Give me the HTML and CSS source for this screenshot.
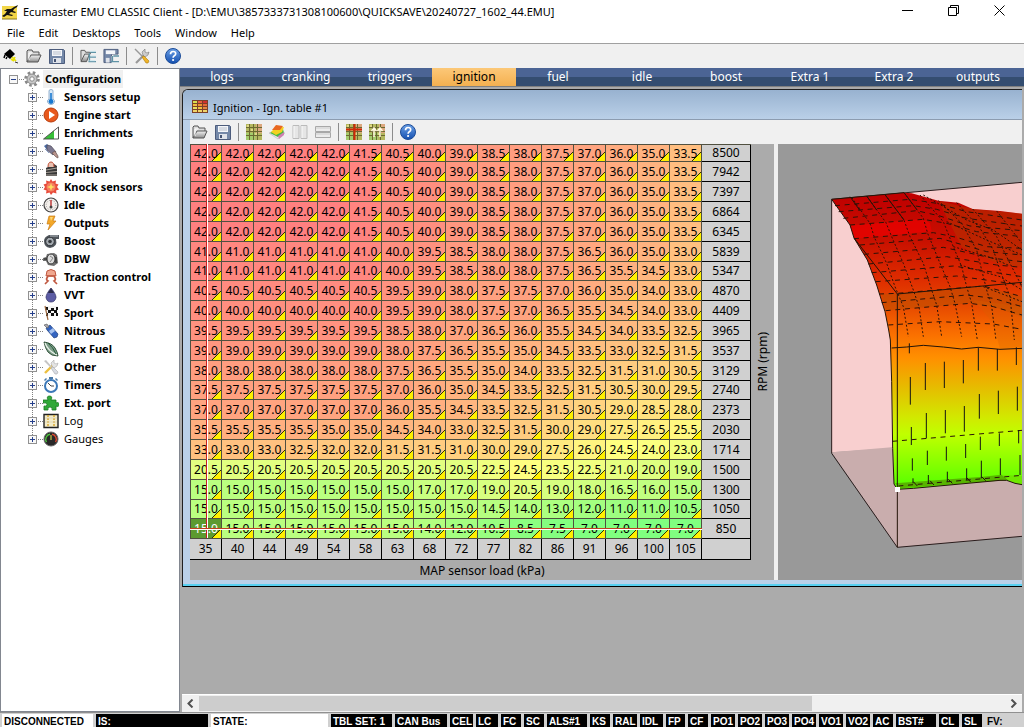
FILE: index.html
```html
<!DOCTYPE html>
<html lang="en">
<head>
    <meta charset="UTF-8">
    <meta name="viewport" content="width=device-width, initial-scale=1.0">
    <title>Ecumaster EMU CLASSIC Client</title>
    <link rel="stylesheet" href="styles.css">
</head>
<body>

    <!-- shared icons -->
    <svg class="defs" width="0" height="0">
        <defs>
            <linearGradient id="surf" x1="0" y1="170" x2="0" y2="1050" gradientUnits="userSpaceOnUse">
                <stop offset="0" stop-color="#c00000"/>
                <stop offset="0.15" stop-color="#c81000"/>
                <stop offset="0.28" stop-color="#de2c00"/>
                <stop offset="0.38" stop-color="#e84c00"/>
                <stop offset="0.47" stop-color="#fa7000"/>
                <stop offset="0.55" stop-color="#ff9000"/>
                <stop offset="0.65" stop-color="#e6bc00"/>
                <stop offset="0.75" stop-color="#d2e800"/>
                <stop offset="0.81" stop-color="#c0ff00"/>
                <stop offset="0.92" stop-color="#80ff00"/>
                <stop offset="1" stop-color="#50ff00"/>
            </linearGradient>
            <linearGradient id="blueball" x1="0" y1="0" x2="0" y2="1">
                <stop offset="0" stop-color="#6ba0e6"/>
                <stop offset="1" stop-color="#1550b0"/>
            </linearGradient>
            <linearGradient id="metal" x1="0" y1="0" x2="0" y2="1">
                <stop offset="0" stop-color="#f4f4f4"/>
                <stop offset="1" stop-color="#8c8c8c"/>
            </linearGradient>
        </defs>
        <symbol id="i-logo" viewBox="0 0 16 16">
            <path d="M0 2h15v13H0z" fill="#f2d648"/>
            <path d="M0 12l3-2 2-3-3 0 3-2 4 0 3-2 4-2-1 2-3 2-1 2 3 1-1 1-4-1-2 2 4 1-1 1-5-1-3 2z" fill="#111"/>
            <path d="M0 15h15" stroke="#8c7c20"/>
        </symbol>
        <symbol id="i-connect" viewBox="0 0 16 16">
            <path d="M1 6l6-5 5 5-5 5z" fill="#000"/>
            <path d="M2 7l-1 3M4 9l-1 2" stroke="#000" stroke-width="1.5"/>
            <path d="M9 9l4 4M10 13l2-4M8 11l3 2" stroke="#e8e000" stroke-width="1.6"/>
            <path d="M12 14l3 1" stroke="#333"/>
        </symbol>
        <symbol id="i-open" viewBox="0 0 16 16">
            <path d="M1 14V3l1-1h4l1 2h6v3" fill="#ddd" stroke="#555"/>
            <path d="M1 14l4-7h10l-3 7z" fill="url(#metal)" stroke="#555"/>
            <path d="M3 12V5h3" stroke="#fff" fill="none"/>
        </symbol>
        <symbol id="i-save" viewBox="0 0 16 16">
            <path d="M.5 1.500h14l1 1v13H.5z" fill="#7488a8" stroke="#4c5c7c"/>
            <path d="M3 2h10v6H3z" fill="#f4f6fa"/>
            <path d="M4 4h8M4 6h8" stroke="#b8c0cc"/>
            <path d="M4 10h8v5H4z" fill="#dfe3ea"/>
            <path d="M5 11h2v3H5z" fill="#445474"/>
        </symbol>
        <symbol id="i-opentree" viewBox="0 0 17 16">
            <path d="M1 13V2h4l1 2h5v2" fill="#ddd" stroke="#555"/>
            <path d="M1 14l4-8h5l-3 8z" fill="url(#metal)" stroke="#555"/>
            <path d="M11 4h6M9 9h8M9 14h8M10 5v9" stroke="#5f93a6" fill="none" stroke-width="1.500"/>
            <path d="M10 3h7M11 8h6M10 13h6" stroke="#cfe8ef"/>
        </symbol>
        <symbol id="i-savetree" viewBox="0 0 17 16">
            <path d="M1 1h15v5H9v9H1z" fill="#7488a8" stroke="#4c5c7c"/>
            <path d="M3 2h10v4H3z" fill="#f4f6fa"/>
            <path d="M3 10h4v5H3z" fill="#dfe3ea"/>
            <path d="M9 8h7v7H9z" fill="#f0f0f0"/>
            <path d="M11 8h6M8 14h9M10 8v6" stroke="#5f93a6" fill="none" stroke-width="1.500"/>
        </symbol>
        <symbol id="i-tools" viewBox="0 0 16 16">
            <path d="M2 15l8-8" stroke="#999" stroke-width="2.200"/>
            <path d="M9 7l-1-3 3-3 0 3 2 1 2-1-1 3-3 2z" fill="#ccc" stroke="#777" stroke-width=".6"/>
            <path d="M1 1l8 8" stroke="#999" stroke-width="1.500"/>
            <path d="M8 9l2-1 5 5-1 2-2 0z" fill="#f0b428" stroke="#a87810" stroke-width=".6"/>
        </symbol>
        <symbol id="i-other" viewBox="0 0 16 16">
            <path d="M2 14l8-8" stroke="#ecc040" stroke-width="2.400"/>
            <path d="M9 7l-1-3 3-3 0 3 2 1 2-1-1 3-3 2z" fill="#e4e4e4" stroke="#aaa" stroke-width=".6"/>
            <path d="M1 2l2-1 6 7-1 1z" fill="#c4c4c4"/>
            <path d="M8 9l2-1 5 5-1 2-2 0z" fill="#d8dce4" stroke="#a8a8a8" stroke-width=".6"/>
        </symbol>
        <symbol id="i-help" viewBox="0 0 16 16">
            <circle cx="8" cy="8" r="7.500" fill="url(#blueball)" stroke="#1c4c98"/>
            <path d="M5.500 6.200q0-2.700 2.600-2.700t2.600 2.200q0 1.300-1.400 2.100-1.200.7-1.200 1.900" fill="none" stroke="#fff" stroke-width="1.700"/>
            <circle cx="8.100" cy="12" r="1.100" fill="#fff"/>
        </symbol>
        <symbol id="i-grid" viewBox="0 0 16 16">
            <path d="M0 0h16v16H0z" fill="#b4b860"/>
            <path d="M10 0h6v9h-6z" fill="#dca880"/>
            <path d="M0 9h9v7H0z" fill="#a4cc6c"/>
            <path d="M0 3.500h16M0 7.500h16M0 11.500h16M3.500 0v16M7.500 0v16M11.500 0v16" stroke="#6c6a30"/>
            <path d="M1 1h2v2H1zM5 5h2v2H5zM9 9h2v2H9z" fill="#e0d884"/>
        </symbol>
        <symbol id="i-surface" viewBox="0 0 16 16">
            <path d="M0 9l8-3 8 3-7 6z" fill="#e8e0f0" stroke="#bbb" stroke-width=".6"/>
            <path d="M1 9l5-3 8-1 1 4-6 4z" fill="#44b840"/>
            <path d="M2 8l4-4 9-1-2 5-6 3z" fill="#f4d020"/>
            <path d="M3 6l4-5 7 1-3 4z" fill="#e86820"/>
            <path d="M9 12l6-4v3l-5 4z" fill="#d080b0"/>
        </symbol>
        <symbol id="i-vsplit" viewBox="0 0 16 16">
            <path d="M1 1.500h6v13H1zM9 1.500h6v13H9z" fill="#e6e6e6" stroke="#bababa"/>
            <path d="M2 2v12M10 2v12" stroke="#fafafa"/>
        </symbol>
        <symbol id="i-hsplit" viewBox="0 0 16 16">
            <path d="M.5 2.500h15v5H.5zM.5 8.500h15v5H.5z" fill="#ececec" stroke="#a8a8a8"/>
            <path d="M1 4h14M1 10h14" stroke="#ccc"/>
        </symbol>
        <symbol id="i-gridcross" viewBox="0 0 16 16">
            <use href="#i-grid"/>
            <path d="M0 5.500h16M8.500 0v16" stroke="#d02808" stroke-width="2"/>
        </symbol>
        <symbol id="i-gridup" viewBox="0 0 16 16">
            <use href="#i-grid"/>
            <path d="M5 13V5M2.500 7L5 4l2.500 3M11 13V5M8.500 7L11 4l2.500 3" stroke="#fff8e0" stroke-width="1.500" fill="none"/>
        </symbol>
        <symbol id="i-table" viewBox="0 0 16 13">
            <path d="M0 0h16v13H0z" fill="#7c4028"/>
            <path d="M1 1h4v2H1z" fill="#d8e050"/><path d="M6 1h4v2H6z" fill="#e86040"/><path d="M11 1h4v2h-4z" fill="#d03030"/>
            <path d="M1 4h4v2H1zM6 7h4v2H6z" fill="#f0c040"/><path d="M6 4h4v2H6z" fill="#f09030"/><path d="M11 4h4v2h-4z" fill="#e86838"/>
            <path d="M1 7h4v2H1z" fill="#e8e060"/><path d="M11 7h4v2h-4z" fill="#e88840"/>
            <path d="M1 10h4v2H1zM6 10h4v2H6zM11 10h4v2h-4z" fill="#f0d468"/>
        </symbol>
        <symbol id="i-gear" viewBox="0 0 16 16">
            <circle cx="8" cy="8" r="6.500" fill="none" stroke="#888" stroke-width="2.600" stroke-dasharray="2.600 2.500"/>
            <circle cx="8" cy="8" r="5" fill="#c8c8c8" stroke="#888"/>
            <circle cx="8" cy="8" r="2.200" fill="#fff" stroke="#888"/>
        </symbol>
        <symbol id="i-thermo" viewBox="0 0 16 16">
            <path d="M6 2q0-1.500 2-1.500T10 2v8q2 1 1.500 3-1 2.500-3.500 2.500T4.500 13q-.5-2 1.500-3z" fill="#dcebf8" stroke="#7ca0c4" stroke-width=".8"/>
            <circle cx="8" cy="12.500" r="2.400" fill="#1878d0"/>
            <path d="M8 4v8" stroke="#1878d0" stroke-width="1.600"/>
        </symbol>
        <symbol id="i-start" viewBox="0 0 16 16">
            <circle cx="8" cy="8" r="7" fill="#e8581c" stroke="#b83c0c"/>
            <path d="M6 4l6 4-6 4z" fill="#fff"/>
        </symbol>
        <symbol id="i-enrich" viewBox="0 0 16 16">
            <path d="M1 14L15 2v12z" fill="#fff"/>
            <path d="M1 14l10-8.500V14z" fill="#38c038"/>
            <path d="M.5 14L15.500 2v12z" fill="none" stroke="#444" stroke-width=".9"/>
        </symbol>
        <symbol id="i-fuel" viewBox="0 0 16 16">
            <path d="M1 3l3-2 3 3-3 3z" fill="#4c6ca4"/>
            <path d="M4 2l4 1 5 6-3 3-6-5z" fill="#7c7890" stroke="#4c4858" stroke-width=".7"/>
            <path d="M9 10l3-2 3 5 0 2-2-1z" fill="#b8948c" stroke="#604c48" stroke-width=".6"/>
            <path d="M2 6l4 4" stroke="#889cc4"/>
        </symbol>
        <symbol id="i-coil" viewBox="0 0 16 16">
            <path d="M3 7l8-4 3 2v10l-11 0z" fill="#383838"/>
            <path d="M3 9l11-2M3 11.500l11-1M3 14h11" stroke="#a8a098"/>
            <path d="M5 6q0-5 3-5t3 5" fill="#e8c0b0" stroke="#c05038"/>
        </symbol>
        <symbol id="i-knock" viewBox="0 0 16 16">
            <path d="M8 0l1.500 2.500L13 1.500l-.5 3 3 1L14 8l2 2.500-3 1 .5 3-3.500-1L8 16l-1.500-2.500-3.500 1 .5-3-3-1L2 8 .5 5.500l3-1L3 1.500l3.500 1z" fill="#e84c3c"/>
            <circle cx="8" cy="8" r="4.500" fill="#f48060"/>
            <path d="M8 4l1 3 3 1-3 1-1 3-1-3-3-1 3-1z" fill="#ffe060"/>
        </symbol>
        <symbol id="i-gauge" viewBox="0 0 16 16">
            <circle cx="8" cy="8" r="7" fill="#f4f0ec" stroke="#444" stroke-width="1.200"/>
            <circle cx="8" cy="8" r="4.800" fill="none" stroke="#999" stroke-dasharray="1 1.500"/>
            <path d="M8 3v6" stroke="#b82020" stroke-width="1.300"/>
            <circle cx="8" cy="10" r="1.500" fill="#444"/>
        </symbol>
        <symbol id="i-bolt" viewBox="0 0 16 16">
            <path d="M6 1h6l-2 5h3L5 15l2-6H4z" fill="#f4a828" stroke="#c87c18" stroke-width=".7"/>
            <path d="M7 2h3L8 6" fill="#fcd878"/>
        </symbol>
        <symbol id="i-turbo" viewBox="0 0 16 16">
            <path d="M6 2h10v4h-3q2 8-6 9-6-1-6-7 0-4 5-6z" fill="#50565c"/>
            <circle cx="7" cy="8.500" r="4.300" fill="#a4aab0" stroke="#2c3034"/>
            <circle cx="7" cy="8.500" r="1.800" fill="#34383c"/>
            <path d="M7 3h8" stroke="#b4bac0"/>
        </symbol>
        <symbol id="i-dbw" viewBox="0 0 16 16">
            <path d="M0 7l3-1 1-3 7-1 3 2 1 8-4 3-6-1-2-4-3 0z" fill="#707070"/>
            <ellipse cx="8" cy="8" rx="4" ry="5" fill="#dcdcdc" stroke="#383838"/>
            <path d="M7 5l3 2-3 4" fill="none" stroke="#888"/>
            <path d="M1 8h3M13 6v6" stroke="#222"/>
        </symbol>
        <symbol id="i-traction" viewBox="0 0 16 16">
            <path d="M4 2q4-3 8 0l1 5H3z" fill="#f0a890" stroke="#c05840"/>
            <path d="M4 7h8M5 8q-3 2 0 4l-3 3M11 8q3 2 0 4l3 3" fill="none" stroke="#c05840" stroke-width="1.700"/>
        </symbol>
        <symbol id="i-drop" viewBox="0 0 16 16">
            <path d="M8 1q5 6 5 9.500-1 4.500-5 4.500t-5-4.500Q3 7 8 1z" fill="#5c5ca4" stroke="#3c3c70" stroke-width=".8"/>
            <path d="M8 1l3 5H5z" fill="#2c2c48"/>
        </symbol>
        <symbol id="i-flag" viewBox="0 0 16 16">
            <path d="M2 1h13v10H4z" fill="#f4f4f4"/>
            <path d="M2 2h3v3H2zM8 3h3v3H8zM13 2h2v3h-2zM5 5h3v3H5zM11 5h3v3h-3zM3 8h2v3H3zM8 8h3v3H8zM13 8h2v3h-2z" fill="#111"/>
            <path d="M2 1l3 14" stroke="#9c6840" stroke-width="1.200"/>
        </symbol>
        <symbol id="i-bottle" viewBox="0 0 16 16">
            <path d="M3 5l4-3 8 9-1 3-3 1-7-8z" fill="#3464c0" stroke="#20407c" stroke-width=".7"/>
            <path d="M6 8l4-3 2 3-4 3z" fill="#a8c4f0"/>
            <path d="M1 2l3-1 2 3-2 1z" fill="#a8a8b0" stroke="#555" stroke-width=".6"/>
        </symbol>
        <symbol id="i-leaf" viewBox="0 0 16 16">
            <path d="M1 1q8 1 11 6t3 8q-7 0-10-4T1 1z" fill="#7c9c88" stroke="#34543c"/>
            <path d="M2 2q3 8 12 12" stroke="#e8f0e8" fill="none" stroke-width="1.300"/>
            <path d="M5 2q5 4 8 11" stroke="#285c3c" fill="none"/>
        </symbol>
        <symbol id="i-timer" viewBox="0 0 16 16">
            <path d="M6 0h4v2H6zM1 3l2-2 1 1-2 2zM13 1l2 2-1 1-2-2z" fill="#4878a8"/>
            <circle cx="8" cy="9" r="6" fill="#fff" stroke="#3c78b8" stroke-width="2"/>
            <path d="M5 6l3 3h3" stroke="#444" fill="none"/>
        </symbol>
        <symbol id="i-puzzle" viewBox="0 0 16 16">
            <path d="M0 5h5Q3 1 6.500 1T8 5h5v3q3-1.500 3 1.500T13 11v4H9q1-3-2-3t-2 3H1v-4q3 1 3-1.500T0 8z" fill="#30a838" stroke="#187820" stroke-width=".8"/>
        </symbol>
        <symbol id="i-log" viewBox="0 0 16 16">
            <path d="M1 1.500h14v13H1z" fill="#f4ecc8" stroke="#222" stroke-width="1.400"/>
            <path d="M5 2v12M11 2v12" stroke="#d8a830" stroke-width="1.500" stroke-dasharray="2 1"/>
            <path d="M2 5h12M2 9h12" stroke="#dcd4bc" stroke-width=".8"/>
        </symbol>
        <symbol id="i-dial" viewBox="0 0 16 16">
            <circle cx="8" cy="8" r="7" fill="#282828" stroke="#666"/>
            <path d="M3.500 11A5 5 0 0 1 7 3.300" stroke="#50c840" fill="none" stroke-width="1.400"/>
            <path d="M9 3.300A5 5 0 0 1 12.500 11" stroke="#e04830" fill="none" stroke-width="1.400"/>
            <path d="M8 4v5" stroke="#e8e850"/>
        </symbol>
    </svg>

    <header class="titlebar">
        <svg class="icon"><use href="#i-logo"/></svg>
        <h1>Ecumaster EMU CLASSIC Client - [D:\EMU\3857333731308100600\QUICKSAVE\20240727_1602_44.EMU]</h1>
        <div class="windowButtons">
            <button aria-label="Minimize"><svg width="11" height="11"><path d="M0 5.500h11" stroke="#000"/></svg></button>
            <button aria-label="Restore"><svg width="11" height="11"><path d="M.5 2.500h8v8h-8zM2.500 2.500v-2h8v8h-2" fill="none" stroke="#000"/></svg></button>
            <button aria-label="Close"><svg width="11" height="11"><path d="M.5.5l10 10M10.500.5l-10 10" stroke="#000"/></svg></button>
        </div>
    </header>

    <nav class="menu">
        <button>File</button>
        <button>Edit</button>
        <button>Desktops</button>
        <button>Tools</button>
        <button>Window</button>
        <button>Help</button>
    </nav>

    <div class="toolbar mainTools">
        <button aria-label="Connect"><svg class="icon"><use href="#i-connect"/></svg></button>
        <button aria-label="Open"><svg class="icon"><use href="#i-open"/></svg></button>
        <button aria-label="Save"><svg class="icon"><use href="#i-save"/></svg></button>
        <span class="sep"></span>
        <button aria-label="Open desktops"><svg class="icon"><use href="#i-opentree"/></svg></button>
        <button aria-label="Save desktops"><svg class="icon"><use href="#i-savetree"/></svg></button>
        <span class="sep"></span>
        <button aria-label="Options"><svg class="icon"><use href="#i-tools"/></svg></button>
        <span class="sep"></span>
        <button aria-label="Help"><svg class="icon"><use href="#i-help"/></svg></button>
    </div>

    <main class="main">
        <aside class="tree">
            <div class="root">
                <button class="toggle" aria-label="Collapse"></button>
                <span class="dots"></span>
                <svg class="icon"><use href="#i-gear"/></svg>
                <span class="label">Configuration</span>
            </div>
            <ul id="tree"></ul>
        </aside>

        <section class="desktop">
            <nav class="tabs">
                <button>logs</button>
                <button>cranking</button>
                <button>triggers</button>
                <button class="active">ignition</button>
                <button>fuel</button>
                <button>idle</button>
                <button>boost</button>
                <button>Extra 1</button>
                <button>Extra 2</button>
                <button>outputs</button>
            </nav>

            <div class="mdi">
                <div class="child">
                    <div class="childTitle">
                        <svg class="tableIcon"><use href="#i-table"/></svg>
                        <h2>Ignition - Ign. table #1</h2>
                    </div>
                    <div class="toolbar childTools">
                        <button aria-label="Open table"><svg class="icon"><use href="#i-open"/></svg></button>
                        <button aria-label="Save table"><svg class="icon"><use href="#i-save"/></svg></button>
                        <span class="sep"></span>
                        <button aria-label="Show 2D"><svg class="icon"><use href="#i-grid"/></svg></button>
                        <button aria-label="Show 3D"><svg class="icon"><use href="#i-surface"/></svg></button>
                        <button aria-label="Split vertical"><svg class="icon"><use href="#i-vsplit"/></svg></button>
                        <button aria-label="Split horizontal"><svg class="icon"><use href="#i-hsplit"/></svg></button>
                        <span class="sep"></span>
                        <button aria-label="Follow"><svg class="icon"><use href="#i-gridcross"/></svg></button>
                        <button aria-label="Modify"><svg class="icon"><use href="#i-gridup"/></svg></button>
                        <span class="sep"></span>
                        <button aria-label="Table help"><svg class="icon"><use href="#i-help"/></svg></button>
                    </div>
                    <div class="views">
                        <div class="tableView">
                            <div class="gridBox">
                                <table>
                                    <tbody id="cells"></tbody>
                                    <tfoot id="loads"></tfoot>
                                </table>
                                <div class="cursorX"></div>
                                <div class="cursorY"></div>
                            </div>
                            <div class="rpm"><span>RPM (rpm)</span></div>
                            <div class="load">MAP sensor load (kPa)</div>
                        </div>
                        <div class="surfaceView">
                            <svg viewBox="-6 12 732 1305" preserveAspectRatio="xMinYMin slice">
                                <!-- box walls -->
                                <path d="M155 178L726 127V900L155 937z" fill="#f8cfcf"/>
                                <path d="M155 937L335 922L726 900V1189L352 1222z" fill="#c9adad"/>
                                <g fill="none" stroke="#2a1c1c" stroke-width="3">
                                    <path d="M155 178V940L352 1222L726 1189M155 178L726 127"/>
                                </g>
                                <!-- surface -->
                                <path d="M155 178L372 158L395 160L475 182L535 188L578 207L660 213L726 221V1034L705 1030L680 1021L660 1021L400 1045L352 1048L342 1032L335 725L331 600L326 570L315 515L290 435L262 360L222 294L210 255z" fill="url(#surf)"/>
                                <path d="M210 257L430 236L450 250L455 274L225 296z" fill="#f00000" opacity=".65"/>
                                <path d="M475 182L578 207L726 221V380L650 370L545 320z" fill="#b03c00" opacity=".45"/>
                                <path d="M305 462L352 460L610 438L726 470V530L640 500L570 490L317 512z" fill="#b85000" opacity=".5"/>
                                <path d="M580 480L726 500V620L660 626L640 550z" fill="#d86000" opacity=".3"/>
                                <path d="M345 1030L600 1011L665 1004L685 1020L360 1045z" fill="#58b400"/>
                                <path d="M665 1004L726 1008V1034L690 1024z" fill="#70e800"/>
                                <g fill="none" stroke="#2a1208" stroke-width="3" stroke-dasharray="15 14">
                                    <path d="M165 197L390 178L470 190L560 215L726 240"/>
                                    <path d="M176 215L400 197L470 208L560 235L726 258"/>
                                    <path d="M190 235L410 212L480 228L570 258L726 272"/>
                                    <path d="M210 255L430 238L500 250L590 275L726 290"/>
                                    <path d="M222 296L460 278L530 292L620 320L726 325"/>
                                    <path d="M240 315L480 295L620 335L726 345"/>
                                    <path d="M252 343L490 322L640 355L726 365"/>
                                    <path d="M265 372L500 350L650 375L726 382"/>
                                    <path d="M275 398L520 378L726 410"/>
                                    <path d="M287 425L530 408L726 435"/>
                                    <path d="M297 462L352 460L610 438L726 470"/>
                                    <path d="M305 488L560 465L640 475L726 500"/>
                                    <path d="M317 512L570 490L640 500L726 525"/>
                                    <path d="M325 555L480 545L640 552L726 568"/>
                                    <path d="M337 904L726 871"/>
                                    <path d="M355 1038L726 1006"/>
                                </g>
                                <g fill="none" stroke="#2a1208" stroke-width="3" stroke-dasharray="6 6">
                                    <path d="M215 172L270 250L283 292L320 370L345 440L370 500L385 590"/>
                                    <path d="M260 168L318 248L335 290L370 370L400 450L417 500L430 590"/>
                                    <path d="M315 164L372 240L390 290L430 370L455 450L470 495L485 590"/>
                                    <path d="M372 158L430 235L443 280L480 370L510 440L525 490L545 590"/>
                                    <path d="M420 165L490 245L520 320L545 380L560 440L575 490L592 600"/>
                                    <path d="M475 182L545 250L590 330L620 450L635 500L648 600"/>
                                    <path d="M530 188L600 265L640 330L660 390L690 470L703 600"/>
                                    <path d="M578 207L650 290L690 370L726 440M650 213L726 310"/>
                                    <path d="M430 165L560 240L640 270L726 330M500 245L620 300L726 345M520 320L640 355L690 378M540 375L660 410L726 450M610 440L726 485"/>
                                </g>
                                <g fill="none" stroke="#141414" stroke-width="3">
                                    <path d="M388 610V640M391 711V794M394 861V915M397 955V992M399 1015V1030"/>
                                    <path d="M436 669V750M439 819V895M442 932V975M445 1005V1030"/>
                                    <path d="M493 665V744M496 810V880M499 920V962M502 995V1025"/>
                                    <path d="M550 660V730M553 798V875M557 912V954M560 985V1020"/>
                                    <path d="M595 622V692M598 762V836M601 890V930M604 962V1015"/>
                                    <path d="M652 627V692M655 752V822M658 880V918M661 955V1005"/>
                                    <path d="M709 622V675M712 740V812M716 870V910M720 945V1005"/>
                                </g>
                                <g fill="none" stroke="#241408" stroke-width="3">
                                    <path d="M335 624L380 621L430 616L490 621L545 627L595 622L660 628L726 625"/>
                                    <path d="M155 178L210 255L222 294L262 360L290 435L315 515L326 570L331 600L335 725L338 925L342 1032L352 1048L400 1045L660 1021L680 1021L705 1030L726 1034"/>
                                    <path d="M155 178L372 158M210 170L240 212M260 168L290 210M315 164L372 240M372 158L410 208M400 1025L412 1038M450 1022L462 1035M505 1018L517 1030M560 1013L572 1026M605 1010L617 1022"/>
                                    <path d="M222 294L352 462L726 427M352 462V1222"/>
                                </g>
                                <path d="M345 1041h15v15h-15z" fill="#fff"/>
                            </svg>
                        </div>
                    </div>
                </div>
            </div>

            <div class="scrollbar">
                <button aria-label="Scroll left"><svg width="7" height="9"><path d="M5.500.5l-4 4 4 4" fill="none" stroke="#505050" stroke-width="2"/></svg></button>
                <div class="track"><div class="thumb"></div></div>
                <button aria-label="Scroll right"><svg width="7" height="9"><path d="M1.500.5l4 4-4 4" fill="none" stroke="#505050" stroke-width="2"/></svg></button>
            </div>
        </section>
    </main>

    <footer class="status">
        <span class="light">DISCONNECTED</span>
        <span>IS:</span>
        <span class="light">STATE:</span>
        <span>TBL SET: 1</span>
        <span>CAN Bus</span>
        <span>CEL</span>
        <span>LC</span>
        <span>FC</span>
        <span>SC</span>
        <span>ALS#1</span>
        <span>KS</span>
        <span>RAL</span>
        <span>IDL</span>
        <span>FP</span>
        <span>CF</span>
        <span>PO1</span>
        <span>PO2</span>
        <span>PO3</span>
        <span>PO4</span>
        <span>VO1</span>
        <span>VO2</span>
        <span>AC</span>
        <span>BST#</span>
        <span>CL</span>
        <span>SL</span>
        <span class="plain">FV:</span>
    </footer>

    <script src="script.js"></script>
</body>
</html>
```

FILE: styles.css
```css
* {
    box-sizing: border-box;
}
body {
    margin: 0;
    height: 100vh;
    display: flex;
    flex-direction: column;
    overflow: hidden;
    background-color: #f0f0f0;
    color: black;
    font-family: "Noto Sans", "Open Sans", sans-serif;
    font-size: 12px;
    line-height: 16px;
}
button {
    margin: 0;
    padding: 0;
    border: none;
    background: none;
    color: inherit;
    font: inherit;
}
h1, h2 {
    margin: 0;
    font-size: 11px;
    font-weight: normal;
}
svg {
    display: block;
}
.defs {
    position: absolute;
}
.icon {
    width: 16px;
    height: 16px;
    flex: none;
}

/* title and menu */
.titlebar {
    height: 24px;
    flex: none;
    display: flex;
    align-items: center;
    gap: 5px;
    padding: 0 2px;
    background-color: white;
}
.titlebar h1 {
    flex: 1;
    white-space: nowrap;
}
.windowButtons {
    display: flex;
    height: 24px;
    padding-bottom: 3px;
}
.windowButtons button {
    width: 46px;
    display: flex;
    justify-content: center;
    align-items: center;
}
.menu {
    height: 20px;
    flex: none;
    display: flex;
    align-items: center;
    gap: 14px;
    padding: 0 7px 2px;
    background-color: white;
    border-bottom: 1px solid #a0a0a0;
    font-size: 11px;
}
.toolbar {
    height: 24px;
    flex: none;
    display: flex;
    align-items: center;
    gap: 7px;
    background-color: #f0f0f0;
}
.mainTools {
    padding: 0 3px;
}
.sep {
    width: 1px;
    height: 18px;
    background-color: #8c8c8c;
}

/* left tree */
.main {
    flex: 1;
    min-height: 0;
    display: flex;
}
.tree {
    width: 180px;
    flex: none;
    padding-top: 1px;
    background-color: white;
    border: 1px solid #828790;
    font-size: 11px;
    font-weight: bold;
}
.tree ul {
    margin: 0;
    padding: 0;
    list-style: none;
}
.root, .tree li {
    height: 18px;
    display: flex;
    align-items: center;
}
.root {
    padding-left: 8px;
}
.tree li {
    padding-left: 27px;
    background: repeating-linear-gradient(#808080 0 1px, transparent 1px 2px) 31px 0 / 1px 100% no-repeat;
}
.tree li:last-child {
    background-size: 1px 50%;
}
.toggle {
    width: 9px;
    height: 9px;
    flex: none;
    border: 1px solid #919191;
    background: linear-gradient(#26408c, #26408c) center / 5px 1px no-repeat, #f8f8f8;
}
.tree li .toggle {
    background: linear-gradient(#26408c, #26408c) center / 5px 1px no-repeat, linear-gradient(#26408c, #26408c) center / 1px 5px no-repeat, #f8f8f8;
}
.dots {
    width: 6px;
    height: 1px;
    flex: none;
    background: repeating-linear-gradient(to right, transparent 0 1px, #808080 1px 2px);
}
.label {
    margin-left: 3px;
    padding: 0 2px;
    line-height: 18px;
    white-space: nowrap;
}
.root .label {
    background-color: #f0f0f0;
}
.regular {
    font-weight: normal;
}

/* desktop */
.desktop {
    flex: 1;
    min-width: 0;
    display: flex;
    flex-direction: column;
    background-color: #ababab;
}
.tabs {
    height: 18px;
    flex: none;
    display: grid;
    grid-template-columns: repeat(10, 1fr);
    padding-right: 4px;
    background: linear-gradient(#4b6494 50%, #344d70 50%);
    color: white;
}
.tabs .active {
    background: linear-gradient(#fcc878, #f4b050);
    color: black;
}
.mdi {
    flex: 1;
    min-height: 0;
    padding: 2px 2px 0;
    border-top: 1px solid #808080;
}
.child {
    padding: 0 0 6px 7px;
    background-color: #bad0e8;
    border-top: 1px solid #202020;
    border-left: 1px solid #202020;
    border-bottom: 1px solid black;
    border-radius: 6px 0 0 0;
    box-shadow: inset 0 -2px #58d0f0;
}
.childTitle {
    height: 30px;
    display: flex;
    align-items: center;
    gap: 5px;
    margin-left: -7px;
    padding: 4px 0 0 9px;
    background: linear-gradient(#98b2d0, #bad0e8);
    border-bottom: 1px solid #8c9cb0;
    border-radius: 5px 0 0 0;
}
.childTitle h2 {
    padding-top: 2px;
}
.tableIcon {
    width: 16px;
    height: 13px;
}
.childTools {
    padding: 0 2px;
}
.views {
    display: flex;
}
.tableView {
    width: 584px;
    flex: none;
    display: grid;
    grid-template-columns: 561px 23px;
    background-color: #ababab;
}
.gridBox {
    position: relative;
}
table {
    width: 561px;
    table-layout: fixed;
    border-spacing: 0;
    border-top: 1px solid #505040;
}
tr {
    height: 20px;
}
tr:nth-child(6n + 1) {
    height: 19px;
}
tbody tr:first-child {
    height: 17px;
}
td, th {
    padding: 0;
    border: 0 solid #505040;
    border-width: 0 1px 1px 0;
    line-height: 16px;
    font-weight: normal;
    text-align: center;
}
td {
    width: 32px;
    background-image: linear-gradient(135deg, transparent 48%, #303000 48% 55%, #fff000 55%);
    background-size: 9px 9px;
    background-position: right bottom;
    background-repeat: no-repeat;
}
td:first-child {
    border-left-width: 1px;
}
tbody tr:first-child td {
    padding-top: 2px;
    line-height: 14px;
}
th {
    width: 32px;
    background-color: #d0d0d0;
    border-color: black;
}
th:last-child {
    width: 49px;
}
tfoot tr:first-child {
    height: 21px;
}
.selected {
    color: white;
}
.cursorX {
    position: absolute;
    left: 16px;
    top: 0;
    width: 2px;
    height: 394px;
    background: linear-gradient(to right, #c82020 50%, white 50%);
}
.cursorY {
    position: absolute;
    left: 0;
    bottom: 30px;
    width: 512px;
    height: 2px;
    background: linear-gradient(#c04020 50%, white 50%);
}
.rpm {
    grid-column: 2;
    grid-row: 1 / 3;
    display: flex;
    justify-content: center;
    align-items: center;
}
.rpm span {
    writing-mode: vertical-rl;
    transform: rotate(180deg);
}
.load {
    grid-column: 1 / 3;
    grid-row: 2;
    height: 20px;
    line-height: 22px;
    text-align: center;
}
.surfaceView {
    flex: 1;
    min-width: 0;
    display: flex;
    background-color: #999999;
    border-left: 4px solid #f0f0f0;
}
.surfaceView svg {
    width: 100%;
    height: 435px;
}
.scrollbar {
    height: 18px;
    flex: none;
    display: flex;
    margin: 0 2px;
    padding: 1px 0;
    background-color: #f0f0f0;
    border-top: 1px solid white;
}
.scrollbar button {
    width: 17px;
    display: flex;
    justify-content: center;
    align-items: center;
}
.track {
    flex: 1;
}
.thumb {
    width: 76%;
    height: 100%;
    background-color: #cdcdcd;
}

/* status bar */
.status {
    height: 15px;
    flex: none;
    display: grid;
    grid-template-columns: 91px 112px 117px 61px 52px 23px 22px 20px 20px 40px 20px 24px 23px 19px 20px 24px 24px 24px 24px 24px 24px 20px 40px 20px 20px 1fr;
    gap: 3px;
    padding: 1px 0 0 2px;
    background-color: #d0d0d0;
    border-top: 1px solid #909090;
    font: bold 10px/16px "Liberation Sans", Arial, sans-serif;
}
.status span {
    padding-left: 2px;
    background-color: black;
    color: white;
    white-space: nowrap;
    overflow: hidden;
}
.status .light {
    background-color: white;
    color: black;
}
.status .plain {
    background-color: transparent;
    color: black;
}
```

FILE: script.js
```js
let items = [
    ["Sensors setup", "thermo"],
    ["Engine start", "start"],
    ["Enrichments", "enrich"],
    ["Fueling", "fuel"],
    ["Ignition", "coil"],
    ["Knock sensors", "knock"],
    ["Idle", "gauge"],
    ["Outputs", "bolt"],
    ["Boost", "turbo"],
    ["DBW", "dbw"],
    ["Traction control", "traction"],
    ["VVT", "drop"],
    ["Sport", "flag"],
    ["Nitrous", "bottle"],
    ["Flex Fuel", "leaf"],
    ["Other", "other"],
    ["Timers", "timer"],
    ["Ext. port", "puzzle"],
    ["Log", "log"],
    ["Gauges", "dial"]
];

let loads = [35, 40, 44, 49, 54, 58, 63, 68, 72, 77, 82, 86, 91, 96, 100, 105];

//first number is the rpm, then one ignition angle for each load
let rows = [
    [8500, 42, 42, 42, 42, 42, 41.5, 40.5, 40, 39, 38.5, 38, 37.5, 37, 36, 35, 33.5],
    [7942, 42, 42, 42, 42, 42, 41.5, 40.5, 40, 39, 38.5, 38, 37.5, 37, 36, 35, 33.5],
    [7397, 42, 42, 42, 42, 42, 41.5, 40.5, 40, 39, 38.5, 38, 37.5, 37, 36, 35, 33.5],
    [6864, 42, 42, 42, 42, 42, 41.5, 40.5, 40, 39, 38.5, 38, 37.5, 37, 36, 35, 33.5],
    [6345, 42, 42, 42, 42, 42, 41.5, 40.5, 40, 39, 38.5, 38, 37.5, 37, 36, 35, 33.5],
    [5839, 41, 41, 41, 41, 41, 41, 40, 39.5, 38.5, 38, 38, 37.5, 36.5, 36, 35, 33],
    [5347, 41, 41, 41, 41, 41, 41, 40, 39.5, 38.5, 38, 38, 37.5, 36.5, 35.5, 34.5, 33],
    [4870, 40.5, 40.5, 40.5, 40.5, 40.5, 40.5, 39.5, 39, 38, 37.5, 37.5, 37, 36, 35, 34, 33],
    [4409, 40, 40, 40, 40, 40, 40, 39.5, 39, 38, 37.5, 37, 36.5, 35.5, 34.5, 34, 33],
    [3965, 39.5, 39.5, 39.5, 39.5, 39.5, 39.5, 38.5, 38, 37, 36.5, 36, 35.5, 34.5, 34, 33.5, 32.5],
    [3537, 39, 39, 39, 39, 39, 39, 38, 37.5, 36.5, 35.5, 35, 34.5, 33.5, 33, 32.5, 31.5],
    [3129, 38, 38, 38, 38, 38, 38, 37.5, 36.5, 35.5, 35, 34, 33.5, 32.5, 31.5, 31, 30.5],
    [2740, 37.5, 37.5, 37.5, 37.5, 37.5, 37.5, 37, 36, 35, 34.5, 33.5, 32.5, 31.5, 30.5, 30, 29.5],
    [2373, 37, 37, 37, 37, 37, 37, 36, 35.5, 34.5, 33.5, 32.5, 31.5, 30.5, 29, 28.5, 28],
    [2030, 35.5, 35.5, 35.5, 35.5, 35, 35, 34.5, 34, 33, 32.5, 31.5, 30, 29, 27.5, 26.5, 25.5],
    [1714, 33, 33, 33, 32.5, 32, 32, 31.5, 31.5, 31, 30, 29, 27.5, 26, 24.5, 24, 23],
    [1500, 20.5, 20.5, 20.5, 20.5, 20.5, 20.5, 20.5, 20.5, 20.5, 22.5, 24.5, 23.5, 22.5, 21, 20, 19],
    [1300, 15, 15, 15, 15, 15, 15, 15, 17, 17, 19, 20.5, 19, 18, 16.5, 16, 15],
    [1050, 15, 15, 15, 15, 15, 15, 15, 15, 15, 14.5, 14, 13, 12, 11, 11, 10.5],
    [850, 15, 15, 15, 15, 15, 15, 15, 14, 12, 10.5, 8.5, 7.5, 7, 7, 7, 7]
];

//green at 7 degrees, yellow in the middle, red at 42
function cellColor(value) {
    let pos = (value - 7) / 17.5;
    let red = Math.round(Math.min(255, 128 + 127 * pos));
    let green = Math.round(Math.min(255, 128 + 127 * (2 - pos)));
    return `rgb(${red}, ${green}, 128)`;
}

let tree = "";
for (let i = 0; i < items.length; i++) {
    let weight = i > 17 ? " regular" : "";
    tree += `<li><button class="toggle" aria-label="Expand ${items[i][0]}"></button><span class="dots"></span><svg class="icon"><use href="#i-${items[i][1]}"/></svg><span class="label${weight}">${items[i][0]}</span></li>`;
}
document.getElementById("tree").innerHTML = tree;

let cells = "";
for (let i = 0; i < rows.length; i++) {
    cells += "<tr>";
    for (let j = 1; j < rows[i].length; j++) {
        let selected = i == rows.length - 1 && j == 1;
        let color = selected ? "#5c9a30" : cellColor(rows[i][j]);
        cells += `<td class="${selected ? "selected" : "cell"}" style="background-color: ${color}">${rows[i][j].toFixed(1)}</td>`;
    }
    cells += `<th scope="row">${rows[i][0]}</th></tr>`;
}
document.getElementById("cells").innerHTML = cells;

let foot = "<tr>";
for (let i = 0; i < loads.length; i++) {
    foot += `<th scope="col">${loads[i]}</th>`;
}
document.getElementById("loads").innerHTML = foot + "<th></th></tr>";
```
